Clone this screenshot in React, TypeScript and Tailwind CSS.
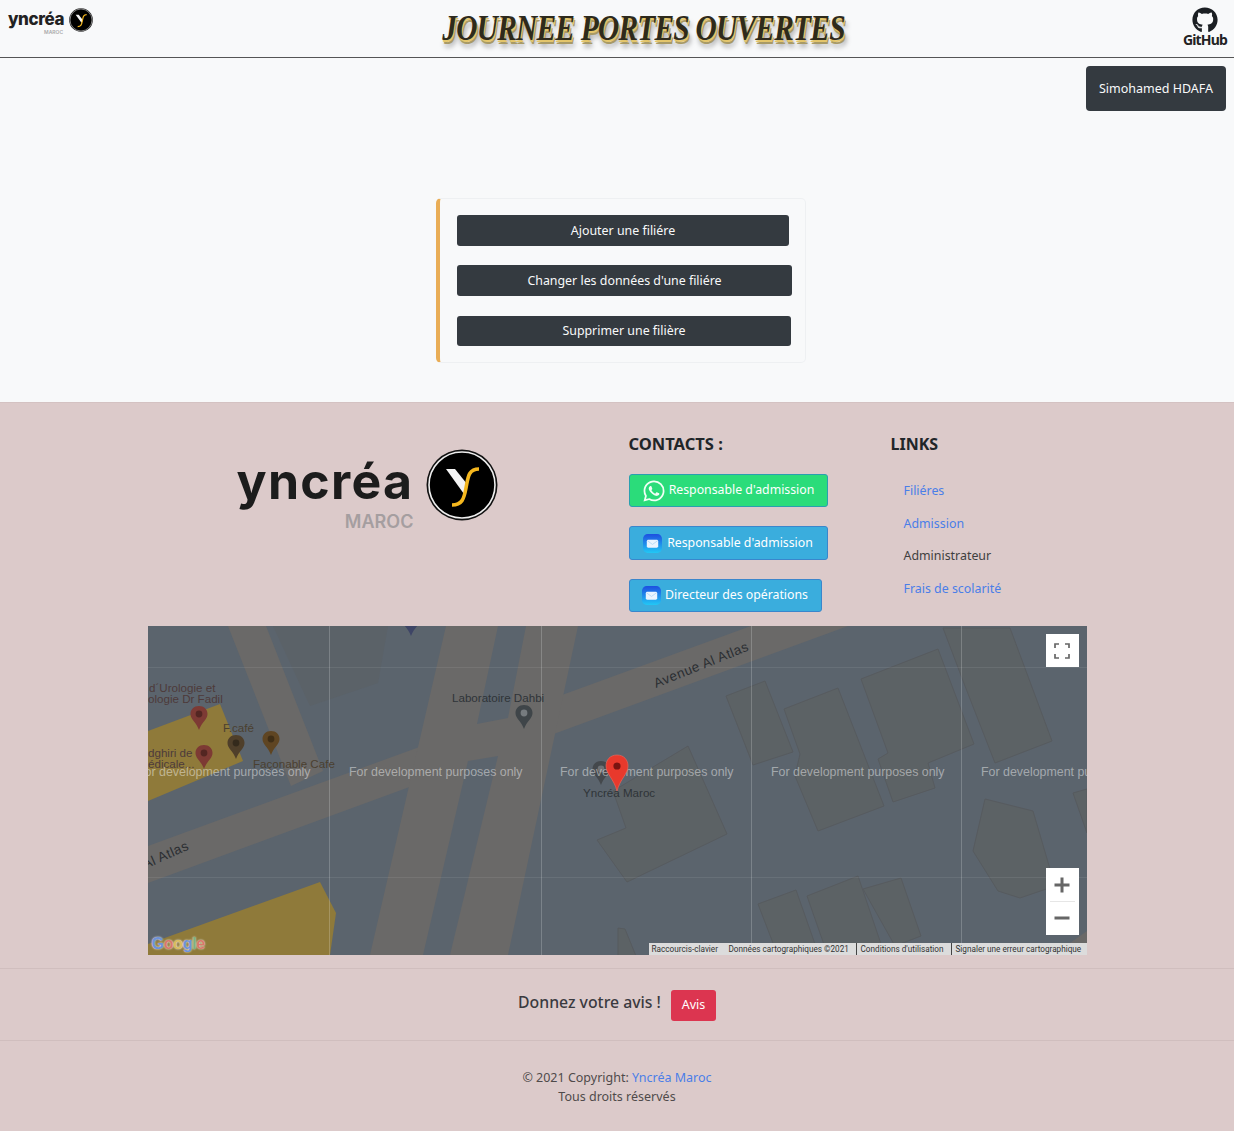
import { FaGithub } from 'react-icons/fa';
import { IoLogoWhatsapp } from 'react-icons/io5';

// ─── Yncréa round mark ─────────────────────────────────────────────────────────
function YMark({ className = '' }: Readonly<{ className?: string }>) {
  return (
    <svg viewBox="0 0 72 72" className={className}>
      <circle cx="36" cy="36" r="35.5" fill="#111" />
      <circle cx="36" cy="36" r="33" fill="#000" stroke="#eee" strokeWidth="1.6" />
      <polygon points="20,20 29,20 41,35 38,45" fill="#f4f4f4" />
      <path d="M53 20 C42 20 42 29 40 39 C38 50 36 56 26 56" fill="none" stroke="#f5b71e" strokeWidth="3.6" />
    </svg>
  );
}

function MailIcon() {
  return (
    <svg viewBox="0 0 20 20" className="h-[19px] w-[19px] shrink-0">
      <defs>
        <linearGradient id="mailbg" x1="0" y1="0" x2="0" y2="1">
          <stop offset="0" stopColor="#1d4fe0" />
          <stop offset="1" stopColor="#22c8f5" />
        </linearGradient>
      </defs>
      <rect width="20" height="20" rx="5" fill="url(#mailbg)" />
      <rect x="4" y="6" width="12" height="8.5" rx="1.5" fill="#eaf4ff" />
      <path d="M4.5 7 L10 11 L15.5 7" fill="none" stroke="#a9d4f5" strokeWidth="0.8" />
    </svg>
  );
}

// ─── Drop pin used on the map ──────────────────────────────────────────────────
function Pin({ x, y, color, dot = '#00000055' }: Readonly<{ x: number; y: number; color: string; dot?: string }>) {
  return (
    <g transform={`translate(${x} ${y})`}>
      <path d="M0 -11 C-5 -11 -8.5 -7.5 -8.5 -3 C-8.5 2.5 -2.5 5.5 0 13 C2.5 5.5 8.5 2.5 8.5 -3 C8.5 -7.5 5 -11 0 -11 Z" fill={color} />
      <circle cx="0" cy="-3" r="3.4" fill={dot} />
    </g>
  );
}

const BUILDINGS = [
  '578,70 617,55 645,126 605,139',
  '636,83 690,62 736,180 670,205 647,150 652,128',
  '713,53 790,23 826,118 780,137 787,162 745,176 730,133 740,127',
  '795,2 862,2 904,115 847,137 817,60',
  '837,173 885,185 907,260 872,272 850,265 825,225',
  '925,167 939,163 939,207',
  '610,278 648,264 667,318 630,330',
  '659,270 710,250 733,318 680,330',
  '715,263 753,252 773,310 747,320',
  '449,214 478,202 465,165 540,120 579,208 479,256',
  '470,302 477,303 488,330 470,330',
];

const WATERMARKS = [-11, 201, 412, 623, 833];

function MapView() {
  return (
    <div className="relative h-[329px] w-[939px] overflow-hidden bg-[#5b646d]">
      <svg viewBox="0 0 939 329" className="block h-[329px] w-[939px]">
        {/* yellow blocks */}
        <polygon points="0,105 72,78 95,135 0,175" fill="#8f7a3a" />
        <polygon points="0,318 172,256 188,287 182,329 0,329" fill="#8f7a3a" />

        {/* roads */}
        <g fill="#6a6968">
          <polygon points="0,220 603,0 700,0 0,257" />
          <polygon points="80,0 118,0 175,145 143,160" />
          <polygon points="298,0 430,0 360,329 222,329" />
          <polygon points="905,329 939,305 939,329" />
        </g>
        <g fill="#5b646d">
          <polygon points="350,0 378,0 360,92 329,98" />
          <polygon points="320,135 350,130 302,329 275,329" />
        </g>
        <polygon points="125,0 240,0 230,57 162,80" fill="#5b6268" />

        {BUILDINGS.map(points => (
          <polygon key={points} points={points} fill="#5c6265" stroke="#575b5f" strokeWidth="1" />
        ))}

        {/* tile seams */}
        <g stroke="#ffffff" strokeWidth="1">
          <line x1="181.5" y1="0" x2="181.5" y2="329" strokeOpacity="0.2" />
          <line x1="393.5" y1="0" x2="393.5" y2="329" strokeOpacity="0.2" />
          <line x1="603.5" y1="0" x2="603.5" y2="329" strokeOpacity="0.2" />
          <line x1="813.5" y1="0" x2="813.5" y2="329" strokeOpacity="0.2" />
          <line x1="0" y1="41.5" x2="939" y2="41.5" strokeOpacity="0.08" />
          <line x1="0" y1="251.5" x2="939" y2="251.5" strokeOpacity="0.08" />
        </g>

        <Pin x={263} y={-3} color="#3e4566" />
        <Pin x={51} y={91} color="#7d3a34" />
        <Pin x={56} y={130} color="#7d3a34" />
        <Pin x={88} y={120} color="#4f3f2a" />
        <Pin x={123} y={116} color="#5f4522" />
        <Pin x={376} y={90} color="#3f4549" dot="#767b7f" />
        <Pin x={453} y={146} color="#44484c" dot="#6e7276" />

        <g fontFamily="'Liberation Sans', sans-serif" fontSize="11.6" fill="#2f3438">
          <text x="1" y="66" fill="#4d3a3a">d´Urologie et</text>
          <text x="0" y="77" fill="#4d3a3a">ologie Dr Fadil</text>
          <text x="75" y="106" fill="#4a4030">F.café</text>
          <text x="0" y="131" fill="#4d3a3a">dghiri de</text>
          <text x="0" y="142" fill="#4d3a3a">édicale...</text>
          <text x="105" y="142" fill="#4a4030">Façonable Cafe</text>
          <text x="304" y="76">Laboratoire Dahbi</text>
          <text x="435" y="171">Yncréa Maroc</text>
        </g>

        <g fontFamily="'Liberation Sans', sans-serif" fontSize="12.4" fill="#ffffff" fillOpacity="0.45">
          {WATERMARKS.map(x => (
            <text key={x} x={x} y="150">For development purposes only</text>
          ))}
        </g>

        <g fontFamily="'Liberation Sans', sans-serif" fontSize="13.5" fill="#2a2e32" letterSpacing="0.5">
          <text transform="translate(508 62) rotate(-22)">Avenue Al Atlas</text>
          <text transform="translate(-3 243) rotate(-24)">Al Atlas</text>
        </g>

        {/* selected place */}
        <g transform="translate(469 146)">
          <path d="M0 -17 C-7 -17 -11 -12 -11 -6 C-11 2 -3 7 0 19 C3 7 11 2 11 -6 C11 -12 7 -17 0 -17 Z" fill="#e8392c" stroke="#f06a5e" strokeWidth="0.6" />
          <circle cx="0" cy="-6" r="3.6" fill="#7a1410" />
        </g>
      </svg>

      <div className="absolute left-[4px] bottom-[1px] font-['Liberation_Sans',sans-serif] text-[16px] font-bold leading-[20px] tracking-[-0.3px] [text-shadow:0_0_2px_#ffffff]">
        <span className="text-[#6e92d8]">G</span>
        <span className="text-[#d9786a]">o</span>
        <span className="text-[#d9bc5c]">o</span>
        <span className="text-[#6e92d8]">g</span>
        <span className="text-[#7ab27f]">l</span>
        <span className="text-[#d9786a]">e</span>
      </div>

      {/* fullscreen */}
      <div className="absolute right-[8px] top-[8px] flex h-[33px] w-[33px] items-center justify-center bg-white">
        <svg viewBox="0 0 16 16" className="h-4 w-4" fill="none" stroke="#666" strokeWidth="1.7">
          <path d="M1 5 V1 H5 M11 1 H15 V5 M15 11 V15 H11 M5 15 H1 V11" />
        </svg>
      </div>

      {/* zoom */}
      <div className="absolute right-[8px] top-[242px] flex h-[67px] w-[33px] flex-col items-center bg-white">
        <svg viewBox="0 0 16 16" className="mt-[9px] h-4 w-4" fill="#666">
          <path d="M6.5 0.5 H9.5 V6.5 H15.5 V9.5 H9.5 V15.5 H6.5 V9.5 H0.5 V6.5 H6.5 Z" />
        </svg>
        <div className="mt-[8px] h-px w-[25px] bg-[#e6e6e6]" />
        <svg viewBox="0 0 16 16" className="mt-[8px] h-4 w-4" fill="#666">
          <rect x="0.5" y="6.5" width="15" height="3" />
        </svg>
      </div>

      {/* attribution */}
      <div className="absolute bottom-0 right-0 flex h-[12px] w-[438px] items-center whitespace-nowrap bg-[#dcdcdc] font-['Roboto',sans-serif] text-[8.2px] leading-[12px] text-[#333]">
        <span className="ml-[3px] w-[77px]">Raccourcis-clavier</span>
        <span className="w-[127px]">Données cartographiques ©2021</span>
        <span className="w-[95px] border-l border-[#444] pl-[4px]">Conditions d'utilisation</span>
        <span className="border-l border-[#444] pl-[4px]">Signaler une erreur cartographique</span>
      </div>
    </div>
  );
}

const MANAGE_BUTTONS = [
  { label: 'Ajouter une filiére', className: 'w-[332px] h-[31px]' },
  { label: "Changer les données d'une filiére", className: 'w-[335px] h-[31px]' },
  { label: 'Supprimer une filière', className: 'w-[334px] h-[30px] mt-px' },
];

export default function App() {
  return (
    <div className="min-h-[1131px] w-[1234px] overflow-hidden bg-[#f8f9fa] font-['Noto_Sans',sans-serif] text-[#212529]">
      {/* Top bar */}
      <header className="flex h-[58px] items-start border-b-[1.5px] border-[#555]">
        <div className="ml-[8px] flex w-[120px] items-start pt-[8px]">
          <div className="flex flex-col items-end">
            <span className="font-['Inter',sans-serif] text-[17px] font-extrabold leading-[22px] tracking-[-0.4px] text-[#222]">yncréa</span>
            <span className="mr-[1px] font-['Inter',sans-serif] text-[5px] font-semibold leading-[5px] text-[#aaa]">MAROC</span>
          </div>
          <YMark className="ml-[5px] mt-0 h-[24px] w-[24px]" />
        </div>
        <h1 className="ml-[275px] w-[481px] shrink-0 scale-x-[0.84] whitespace-nowrap pt-[7px] text-center font-['Liberation_Serif',serif] text-[35px] font-bold italic leading-[44px] tracking-[-0.9px] text-[#2e2a1c] [text-shadow:1px_2px_0_#e3c56b,2px_4px_0_#a89a66,3px_7px_6px_rgba(0,0,0,0.35)]">
          JOURNEE PORTES OUVERTES
        </h1>
        <div className="ml-auto mr-[8px] flex w-[42px] flex-col items-center pt-[7px]">
          <FaGithub className="h-[26px] w-[26px] text-[#1b1f23]" />
          <span className="mt-[-1px] text-[14px] font-bold leading-[16px] tracking-[-0.8px] text-[#222]">GitHub</span>
        </div>
      </header>

      {/* Admin area */}
      <main className="h-[344px]">
        <div className="flex justify-end pr-[8px] pt-[8px]">
          <button className="h-[45px] w-[140px] rounded-[4px] bg-[#343a40] pt-px text-[12.5px] text-[#f8f9fa]">
            Simohamed HDAFA
          </button>
        </div>
        <div className="ml-[436px] mt-[87px] flex h-[165px] w-[370px] flex-col gap-[19px] rounded-[5px] border border-l-4 border-[#eef0f2] border-l-[#e9ad56] bg-[#f8f9fa] pl-[17px] pt-[16px]">
          {MANAGE_BUTTONS.map(btn => (
            <button key={btn.label} className={`${btn.className} rounded-[3px] bg-[#343a40] pt-px text-[12.4px] text-[#f8f9fa]`}>
              {btn.label}
            </button>
          ))}
        </div>
      </main>

      {/* Footer */}
      <footer className="h-[729px] border-t border-[#d4c2c2] bg-[#dccaca]">
        <div className="mx-auto w-[939px]">
          <div className="grid h-[223px] grid-cols-[481px_261px_1fr]">
            <div className="flex items-start pl-[89px] pt-[45px]">
              <div className="flex flex-col items-end">
                <span className="font-['Inter',sans-serif] text-[50px] font-bold leading-[66px] tracking-[1.3px] text-[#1c1c1c]">yncréa</span>
                <span className="mt-[-3px] font-['Inter',sans-serif] text-[18px] font-semibold leading-[22px] text-[#a59ea0]">MAROC</span>
              </div>
              <YMark className="ml-[13px] mt-[1px] h-[72px] w-[72px]" />
            </div>

            <div className="flex flex-col items-start pt-[29px]">
              <h5 className="text-[16.5px] font-bold leading-[24px] text-[#212529]">CONTACTS :</h5>
              <button className="mt-[18px] flex h-[33px] w-[199px] items-center justify-center gap-[3px] rounded-[3px] border border-[#2a9fb0] bg-[#2bdc7a] text-[12.3px] text-white">
                <IoLogoWhatsapp className="h-[24px] w-[24px] text-[#f2fff6]" />
                Responsable d'admission
              </button>
              <button className="mt-[19px] flex h-[34px] w-[199px] items-center justify-center gap-[5px] rounded-[3px] border border-[#3a86cc] bg-[#3aaddd] text-[12.3px] text-white">
                <MailIcon />
                Responsable d'admission
              </button>
              <button className="mt-[19px] flex h-[33px] w-[193px] items-center justify-center gap-[4px] rounded-[3px] border border-[#3a86cc] bg-[#3aaddd] text-[12.3px] text-white">
                <MailIcon />
                Directeur des opérations
              </button>
            </div>

            <div className="flex flex-col items-start pt-[29px]">
              <h5 className="pl-px text-[16px] font-bold leading-[24px] text-[#212529]">LINKS</h5>
              <ul className="mt-[26px] flex flex-col gap-[14.5px] pl-[14px] text-[12.4px] leading-[18px]">
                <li className="text-[#4a7ee8]">Filiéres</li>
                <li className="text-[#4a7ee8]">Admission</li>
                <li className="text-[#3f3f3f]">Administrateur</li>
                <li className="text-[#4a7ee8]">Frais de scolarité</li>
              </ul>
            </div>
          </div>

          <MapView />
        </div>

        <div className="mt-[13px] flex h-[73px] items-center justify-center border-y border-[#d0bebe]">
          <span className="mb-[4px] text-[15.8px] font-medium text-[#3a3a3f]">Donnez votre avis !</span>
          <button className="ml-[10px] mt-[2px] h-[31px] w-[45px] rounded-[3px] bg-[#dc3550] text-[12.5px] text-white">Avis</button>
        </div>

        <div className="pt-[27px] text-center text-[12.5px] leading-[19px] text-[#4f4a4a]">
          <p>© 2021 Copyright: <span className="text-[#4a7ee8]">Yncréa Maroc</span></p>
          <p>Tous droits réservés</p>
        </div>
      </footer>
    </div>
  );
}
